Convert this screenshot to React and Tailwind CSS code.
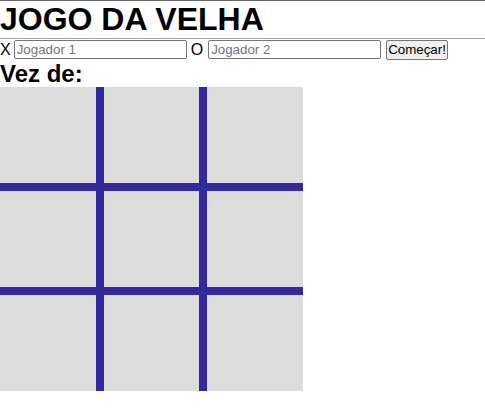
import { useState } from "react"

const cells = Array.from({ length: 9 }, (_, i) => i)

export default function App() {
  const [board, setBoard] = useState(Array(9).fill(""))
  const [vez, setVez] = useState("")

  return (
    <div className="font-['Liberation_Sans',Arial,sans-serif] text-black bg-white min-h-screen">
      <div className="border-t border-t-[#6a6a6a] border-b border-b-[#a6a6a6]">
        <h1 className="m-0 text-[32px] font-bold leading-[37px]">JOGO DA VELHA</h1>
      </div>

      <div className="text-[16px] leading-[21px] h-[21px] flex items-center whitespace-nowrap">
        <span>X</span>
        <input
          placeholder="Jogador 1"
          className="ml-[3px] w-[173px] h-[19px] border border-[#767676] rounded-[2px] px-[2px] text-[13.33px] leading-[15px] placeholder:text-[#757575] outline-none"
        />
        <span className="ml-[4px]">O</span>
        <input
          placeholder="Jogador 2"
          className="ml-[5px] w-[173px] h-[19px] border border-[#767676] rounded-[2px] px-[2px] text-[13.33px] leading-[15px] placeholder:text-[#757575] outline-none"
        />
        <button className="ml-[5px] h-[20px] px-[1px] border border-[#767676] rounded-[2px] bg-[#efefef] text-[13.33px] leading-[15px]">
          Começar!
        </button>
      </div>

      <h2 className="m-0 text-[24px] font-bold leading-[27px]">Vez de:{vez && ` ${vez}`}</h2>

      <div className="w-[303px] grid grid-cols-3 gap-2 bg-[#32299f]">
        {cells.map((i) => (
          <div
            key={i}
            className="h-[96px] bg-[#dcdcdc] flex items-center justify-center text-[48px] font-bold"
            onClick={() => {
              if (board[i]) return
              const next = [...board]
              next[i] = vez === "O" ? "O" : "X"
              setBoard(next)
              setVez(vez === "O" ? "X" : "O")
            }}
          >
            {board[i]}
          </div>
        ))}
      </div>
    </div>
  )
}
